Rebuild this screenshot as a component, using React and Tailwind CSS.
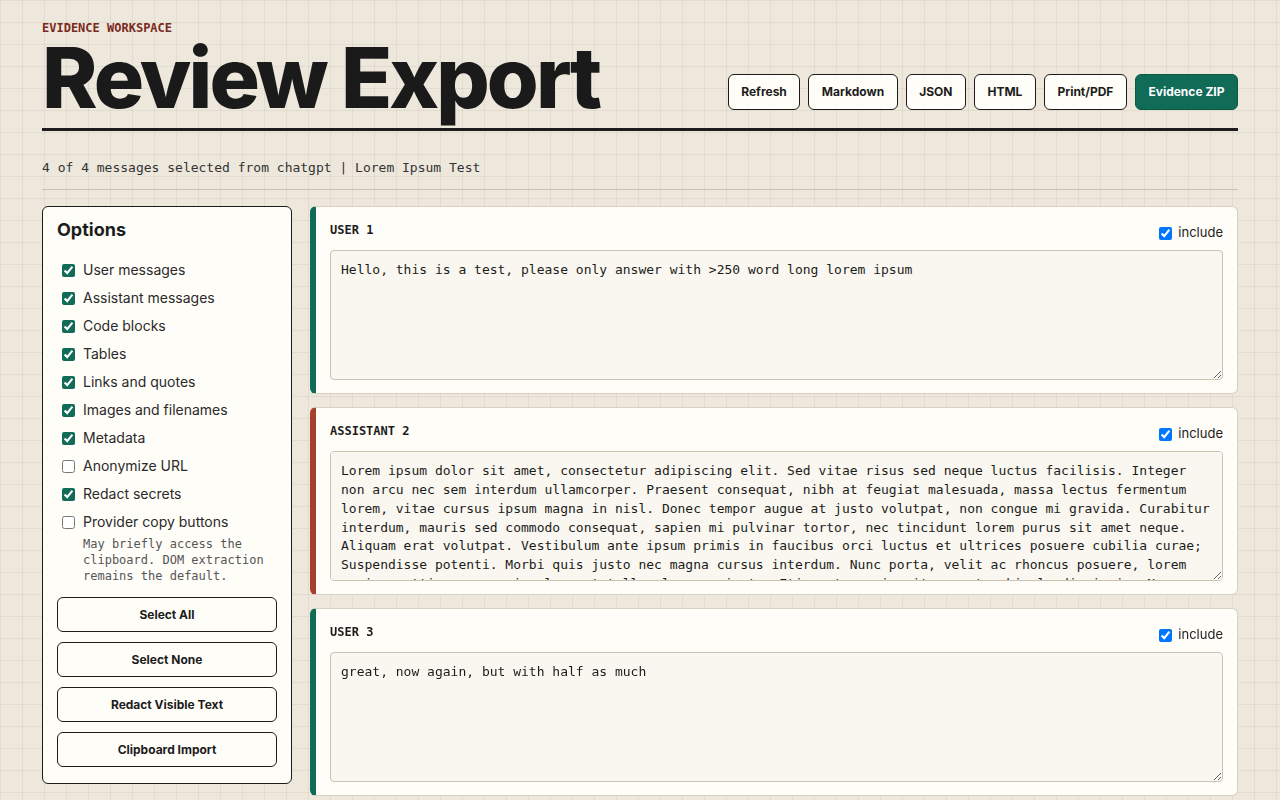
import { useState } from "react";

const sans = "font-['Inter','Liberation_Sans',sans-serif]";
const mono = "font-['DejaVu_Sans_Mono','Liberation_Mono',monospace]";

const OPTIONS = [
  { key: "user", label: "User messages", on: true },
  { key: "assistant", label: "Assistant messages", on: true },
  { key: "code", label: "Code blocks", on: true },
  { key: "tables", label: "Tables", on: true },
  { key: "links", label: "Links and quotes", on: true },
  { key: "images", label: "Images and filenames", on: true },
  { key: "meta", label: "Metadata", on: true },
  { key: "anon", label: "Anonymize URL", on: false },
  { key: "secrets", label: "Redact secrets", on: true },
  { key: "copy", label: "Provider copy buttons", on: false },
];

const LONG_LOREM =
  "Lorem ipsum dolor sit amet, consectetur adipiscing elit. Sed vitae risus sed neque luctus facilisis. Integer non arcu nec sem interdum ullamcorper. Praesent consequat, nibh at feugiat malesuada, massa lectus fermentum lorem, vitae cursus ipsum magna in nisl. Donec tempor augue at justo volutpat, non congue mi gravida. Curabitur interdum, mauris sed commodo consequat, sapien mi pulvinar tortor, nec tincidunt lorem purus sit amet neque. Aliquam erat volutpat. Vestibulum ante ipsum primis in faucibus orci luctus et ultrices posuere cubilia curae; Suspendisse potenti. Morbi quis justo nec magna cursus interdum. Nunc porta, velit ac rhoncus posuere, lorem sapien mattis arcu, quis placerat tellus lorem a justo. Etiam ut mauris vitae erat vehicula dignissim. Nam a sem vel turpis bibendum porta. Fusce eget nibh non lectus blandit faucibus. Cras at lorem sed odio tincidunt consequat. Quisque euismod, lorem in gravida pulvinar, erat sem volutpat nibh, a dictum massa lorem sed ligula. Pellentesque habitant morbi tristique senectus et netus et malesuada fames ac turpis egestas. Vivamus sit amet dui id mi congue molestie. Integer faucibus, ipsum et tincidunt posuere, metus augue vulputate odio, a ultrices magna nisl sed lorem. Mauris gravida orci non sapien vehicula, vel aliquet elit tristique. Phasellus et arcu a augue mollis ultrices. Donec commodo neque vitae diam consequat, a tempor nunc hendrerit. Sed eget lacus in justo gravida dictum vitae eu lorem.";

const SHORT_LOREM =
  "Lorem ipsum dolor sit amet, consectetur adipiscing elit. Integer non arcu nec sem interdum ullamcorper. Praesent consequat, nibh at feugiat malesuada, massa lectus fermentum lorem, vitae cursus ipsum magna in nisl. Donec tempor augue at justo volutpat, non congue mi gravida. Curabitur interdum, mauris sed commodo consequat, sapien mi pulvinar tortor. Aliquam erat volutpat. Morbi quis justo nec magna cursus interdum. Nunc porta, velit ac rhoncus posuere, lorem sapien mattis arcu, quis placerat tellus lorem a justo. Nam a sem vel turpis bibendum porta. Fusce eget nibh non lectus blandit faucibus.";

const MESSAGES = [
  { id: 1, role: "user", text: "Hello, this is a test, please only answer with >250 word long lorem ipsum" },
  { id: 2, role: "assistant", text: LONG_LOREM },
  { id: 3, role: "user", text: "great, now again, but with half as much" },
  { id: 4, role: "assistant", text: SHORT_LOREM },
];

function HeaderButton({ children, primary }) {
  return (
    <button
      className={
        "h-9 rounded-md border px-[12.5px] text-xs font-bold " +
        (primary
          ? "border-[#0d5a48] bg-[#106b57] text-white"
          : "border-[#1c1c1c] bg-[#fffdf8] text-[#1c1c1c]")
      }
    >
      {children}
    </button>
  );
}

function PanelButton({ children }) {
  return (
    <button className="h-[35px] w-full rounded-md border border-[#1c1c1c] bg-[#fffdf8] text-xs font-bold text-[#1c1c1c]">
      {children}
    </button>
  );
}

function MessageCard({ msg, included, onToggle }) {
  const bar = msg.role === "user" ? "border-l-[#106b57]" : "border-l-[#a3412d]";
  return (
    <div
      className={
        "rounded-md border border-[#d9d2c4] border-l-[6px] bg-[#fffdf8] px-[14px] pt-[15px] pb-[13px] " +
        bar
      }
    >
      <div className="mb-[6px] flex h-[22px] items-start justify-between">
        <div className={mono + " text-xs leading-4 font-bold text-[#1c1c1c]"}>
          {msg.role.toUpperCase()} {msg.id}
        </div>
        <label className="flex h-[22px] items-center gap-1.5 text-[13px] text-[#222]">
          <input type="checkbox" className="h-[13px] w-[13px]" checked={included} onChange={onToggle} />
          include
        </label>
      </div>
      <textarea
        className={
          mono +
          " block h-[130px] w-full rounded-[4px] border border-[#cbc4b2] bg-[#f9f7ef] px-[10px] pt-[10px] pb-2 text-[13px] leading-[1.45] text-[#1c1c1c]"
        }
        defaultValue={msg.text}
      />
    </div>
  );
}

export default function App() {
  const [opts, setOpts] = useState(() => Object.fromEntries(OPTIONS.map((o) => [o.key, o.on])));
  const [included, setIncluded] = useState(() => Object.fromEntries(MESSAGES.map((m) => [m.id, true])));

  const count = Object.values(included).filter(Boolean).length;

  return (
    <div
      className={
        sans +
        " min-h-screen bg-[#ede7dc] bg-[linear-gradient(to_right,rgba(60,50,30,0.06)_1px,transparent_1px),linear-gradient(to_bottom,rgba(60,50,30,0.06)_1px,transparent_1px)] bg-[length:22px_22px] px-[42px] pb-10 text-[#1c1c1c]"
      }
    >
      <header className="flex items-end justify-between border-b-[3px] border-[#1c1c1c] pt-5 pb-2">
        <div>
          <div className={mono + " text-xs leading-4 font-bold text-[#7a2a1e]"}>EVIDENCE WORKSPACE</div>
          <h1 className="text-[84px] leading-none font-extrabold tracking-[-0.035em] text-[#1a1a1a]">
            Review Export
          </h1>
        </div>
        <div className="mb-[10px] flex gap-2">
          <HeaderButton>Refresh</HeaderButton>
          <HeaderButton>Markdown</HeaderButton>
          <HeaderButton>JSON</HeaderButton>
          <HeaderButton>HTML</HeaderButton>
          <HeaderButton>Print/PDF</HeaderButton>
          <HeaderButton primary>Evidence ZIP</HeaderButton>
        </div>
      </header>

      <p className={mono + " mt-[27px] text-[13px] leading-5 text-[#333]"}>
        {count} of {MESSAGES.length} messages selected from chatgpt | Lorem Ipsum Test
      </p>
      <hr className="mt-[11px] border-t border-[#c9c1b3]" />

      <div className="mt-4 grid grid-cols-[250px_1fr] items-start gap-[18px]">
        {/* options sidebar */}
        <aside className="rounded-md border border-[#1c1c1c] bg-[#fffdf8] px-[14px] pt-[11px] pb-[16px]">
          <h2 className="text-lg leading-6 font-bold">Options</h2>
          <div className="mt-[14px]">
            {OPTIONS.map((o) => (
              <label key={o.key} className="flex h-7 items-center gap-2 text-sm text-[#2a2a2a]">
                <input
                  type="checkbox"
                  className="ml-[5px] h-[13px] w-[13px] accent-[#106b57]"
                  checked={opts[o.key]}
                  onChange={() => setOpts({ ...opts, [o.key]: !opts[o.key] })}
                />
                {o.label}
              </label>
            ))}
            <p className={mono + " pl-[26px] text-xs leading-4 text-[#555]"}>
              May briefly access the clipboard. DOM extraction remains the default.
            </p>
          </div>
          <div className="mt-[13px] flex flex-col gap-[10px]">
            <PanelButton>Select All</PanelButton>
            <PanelButton>Select None</PanelButton>
            <PanelButton>Redact Visible Text</PanelButton>
            <PanelButton>Clipboard Import</PanelButton>
          </div>
        </aside>

        {/* message list */}
        <main className="flex flex-col gap-[13px]">
          {MESSAGES.map((m) => (
            <MessageCard
              key={m.id}
              msg={m}
              included={included[m.id]}
              onToggle={() => setIncluded({ ...included, [m.id]: !included[m.id] })}
            />
          ))}
        </main>
      </div>
    </div>
  );
}
